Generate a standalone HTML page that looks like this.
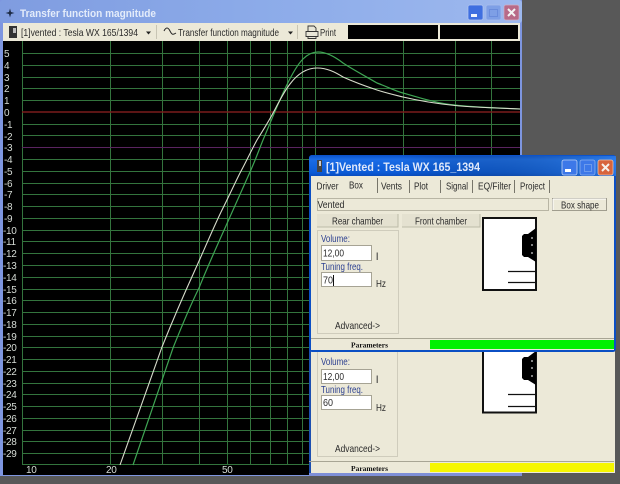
<!DOCTYPE html>
<html><head><meta charset="utf-8"><style>
html,body{margin:0;padding:0;background:#585858;width:620px;height:484px;overflow:hidden}
svg{display:block;filter:blur(.3px)}
text{font-family:"Liberation Sans",Arial,sans-serif;font-size:10.500px;fill:#2a2a2a}
.yl text,.xl text{fill:#d6dcd6;font-size:10px;letter-spacing:-.35px}
.tab{font-size:10.500px;fill:#2a2a2a}
.bl{fill:#2b3f90;font-size:10.500px}
.pm{font-family:"Liberation Serif",serif;font-weight:bold;font-size:7px;fill:#111}
</style></head><body>
<svg xmlns="http://www.w3.org/2000/svg" width="620" height="484" viewBox="0 0 620 484">
<defs>
<linearGradient id="t1" x1="0" y1="0" x2="1" y2="0"><stop offset="0" stop-color="#7f9ce0"/><stop offset=".5" stop-color="#8cabe9"/><stop offset="1" stop-color="#9db8ee"/></linearGradient>
<linearGradient id="t2" x1="0" y1="0" x2="0" y2="1"><stop offset="0" stop-color="#0a50c8"/><stop offset=".2" stop-color="#1a6ce6"/><stop offset=".8" stop-color="#0a5ad6"/><stop offset="1" stop-color="#0848b8"/></linearGradient>
<linearGradient id="t3" x1="0" y1="0" x2="1" y2="0"><stop offset="0" stop-color="#000" stop-opacity="0"/><stop offset="1" stop-color="#3c8cf4" stop-opacity=".55"/></linearGradient>
</defs>
<rect width="620" height="484" fill="#585858"/>

<!-- outer window -->
<rect x="0" y="0" width="522" height="476" fill="#7e96e0"/>
<rect x="0" y="0" width="522" height="23" rx="3" fill="url(#t1)"/>
<path d="M10 8.500L11 12L14.500 13L11 14L10 17.500L9 14L5.500 13L9 12Z" fill="#1c2a44"/>
<text x="20" y="17" textLength="136" lengthAdjust="spacingAndGlyphs" style="font-weight:bold;font-size:11px;fill:#e4ecfa">Transfer function magnitude</text>
<rect x="468" y="5" width="15" height="15" rx="2" fill="#3f6fe0" stroke="#b6c8f0" stroke-width=".7"/>
<rect x="471" y="14" width="6" height="3" fill="#f0f4fc"/>
<rect x="486" y="5" width="15" height="15" rx="2" fill="#7e9fe6" stroke="#a8bdec" stroke-width=".7"/>
<rect x="489.500" y="9.500" width="8" height="7" fill="none" stroke="#6a8cdc"/>
<rect x="504" y="5" width="15" height="15" rx="2" fill="#b86a88" stroke="#d0b0c4" stroke-width=".7"/>
<path d="M508 9L515 16M515 9L508 16" stroke="#f4f4f4" stroke-width="2"/>

<!-- toolbar -->
<rect x="3" y="23" width="517" height="18" fill="#ece9d8"/>
<rect x="9" y="26" width="8" height="12" fill="#333"/><rect x="13" y="28" width="3" height="5" fill="#bbb"/>
<text x="21" y="36" textLength="117" lengthAdjust="spacingAndGlyphs">[1]vented : Tesla WX 165/1394</text>
<path d="M146 31.500h5l-2.500 3z" fill="#222"/>
<path d="M156.500 25v14" stroke="#c8c5b4"/>
<path d="M164 31c2-4 4-4 6 0s3 4 6 2" fill="none" stroke="#222"/>
<text x="178" y="36" textLength="101" lengthAdjust="spacingAndGlyphs">Transfer function magnitude</text>
<path d="M288 31.500h5l-2.500 3z" fill="#222"/>
<path d="M297.500 25v14" stroke="#c8c5b4"/>
<path d="M308 31v-5h6l2 2v3M306 31.500h12v5h-12zM308 36.500v2h8v-2" fill="#e8e6d8" stroke="#333" stroke-width=".9"/>
<text x="320" y="36" textLength="16" lengthAdjust="spacingAndGlyphs">Print</text>
<rect x="348" y="25" width="90" height="14" fill="#000"/>
<rect x="440" y="25" width="78" height="14" fill="#000"/>

<!-- plot -->
<rect x="3" y="41" width="517" height="434" fill="#000"/>
<g stroke="#33743d" stroke-width="1" fill="none">
<path d="M22.500 41V465M110.500 41V465M162.500 41V465M199.500 41V465M227.500 41V465M250.500 41V465M270.500 41V465M287.500 41V465M302.500 41V465M315.500 41V465M403.500 41V465M455.500 41V465M491.500 41V465"/>
<path d="M22 53.500H520M22 65.500H520M22 77.500H520M22 88.500H520M22 100.500H520M22 124.500H520M22 135.500H520M22 159.500H520M22 171.500H520M22 183.500H520M22 194.500H520M22 206.500H520M22 218.500H520M22 230.500H520M22 241.500H520M22 253.500H520M22 265.500H520M22 277.500H520M22 289.500H520M22 300.500H520M22 312.500H520M22 324.500H520M22 336.500H520M22 347.500H520M22 359.500H520M22 371.500H520M22 383.500H520M22 394.500H520M22 406.500H520M22 418.500H520M22 430.500H520M22 441.500H520M22 453.500H520M22 464.500H520"/>
</g>
<path d="M22 112H520" stroke="#7a1c1c" stroke-width="1.500"/>
<path d="M22 147.500H520" stroke="#5a2460" stroke-width="1"/>
<path fill="none" stroke="#3fa554" stroke-width="1.200" d="M133 465C147 425 160 385 173 348C181 328 190 306 199 288C207 268 216 248 225 228C234 208 241 192 250 172C255 161 259 150 263 140C275 112 290 72 303 59C308 54 313 52 318 52C326 52 334 56 343 63C352 69 365 76 377 83C388 87 395 91 403 93C420 98 440 104 455 105C470 107 495 108 520 109"/>
<path fill="none" stroke="#d8dccc" stroke-width="1.100" d="M120 465C135 423 150 380 162 347C172 322 185 292 195 270C205 248 214 226 223 208C229 196 234 185 240 173C246 162 251 151 257 140C262 132 267 124 272 115C278 104 283 93 290 84C296 76 305 68 317 68C327 68 335 72 343 77C354 82 365 86 377 90C386 93 395 95 403 97C420 101 440 104 455 105.500C470 107 495 108 520 109"/>

<g class="yl">
<text x="4" y="57">5</text><text x="4" y="69">4</text><text x="4" y="81">3</text><text x="4" y="92">2</text><text x="4" y="104">1</text><text x="4" y="116">0</text>
<text x="4" y="128">-1</text><text x="4" y="140">-2</text><text x="4" y="151">-3</text><text x="4" y="163">-4</text><text x="4" y="175">-5</text><text x="4" y="187">-6</text><text x="4" y="198">-7</text><text x="4" y="210">-8</text><text x="4" y="222">-9</text>
<text x="3" y="234">-10</text><text x="3" y="245">-11</text><text x="3" y="257">-12</text><text x="3" y="269">-13</text><text x="3" y="281">-14</text><text x="3" y="293">-15</text><text x="3" y="304">-16</text><text x="3" y="316">-17</text><text x="3" y="328">-18</text><text x="3" y="340">-19</text><text x="3" y="351">-20</text><text x="3" y="363">-21</text><text x="3" y="375">-22</text><text x="3" y="387">-23</text><text x="3" y="398">-24</text><text x="3" y="410">-25</text><text x="3" y="422">-26</text><text x="3" y="434">-27</text><text x="3" y="445">-28</text><text x="3" y="457">-29</text>
</g>
<g class="xl"><text x="26" y="473">10</text><text x="106" y="473">20</text><text x="222" y="473">50</text></g>

<!-- lower (background) window -->
<rect x="309" y="340" width="306" height="136" fill="#ece9d8"/>
<rect x="309" y="340" width="2" height="134" fill="#1c4fb0"/>
<rect x="317.500" y="345.500" width="80" height="111" fill="none" stroke="#cfccbc"/>
<text class="bl" x="321" y="365" textLength="29" lengthAdjust="spacingAndGlyphs">Volume:</text>
<rect x="321.500" y="369.500" width="50" height="14" fill="#fff" stroke="#a6a394"/>
<text x="323" y="380" textLength="21" lengthAdjust="spacingAndGlyphs">12,00</text>
<text x="376" y="383">l</text>
<text class="bl" x="321" y="393" textLength="42" lengthAdjust="spacingAndGlyphs">Tuning freq.</text>
<rect x="321.500" y="395.500" width="50" height="14" fill="#fff" stroke="#a6a394"/>
<text x="323" y="406" textLength="10" lengthAdjust="spacingAndGlyphs">60</text>
<text x="376" y="411" textLength="10" lengthAdjust="spacingAndGlyphs">Hz</text>
<text x="335" y="452" textLength="45" lengthAdjust="spacingAndGlyphs">Advanced-&gt;</text>
<rect x="483" y="345" width="53" height="67.500" fill="#fff" stroke="#111" stroke-width="2"/>
<path d="M524 357h4l8-6v34l-8-5h-4l-2-2v-19z" fill="#000"/>
<circle cx="532" cy="361" r=".9" fill="#ddd"/><circle cx="532" cy="368" r=".9" fill="#ddd"/><circle cx="532" cy="376" r=".9" fill="#ddd"/>
<path d="M508 394.500H536M508 406.500H536" stroke="#111" stroke-width="1.300"/>
<path d="M309 461.500H614" stroke="#a8a594"/>
<text class="pm" x="351" y="471" textLength="37" lengthAdjust="spacingAndGlyphs">Parameters</text>
<rect x="430" y="463" width="184" height="9" fill="#f6f600"/>
<rect x="309" y="473" width="213" height="3" fill="#7e8fd8"/>
<rect x="522" y="473" width="98" height="11" fill="#585858"/>
<rect x="615" y="340" width="5" height="144" fill="#585858"/>

<!-- front window -->
<rect x="309" y="155" width="307" height="197" rx="3" fill="#0b4fc4"/>
<rect x="309" y="155" width="307" height="22" rx="3" fill="url(#t2)"/>
<rect x="400" y="156" width="216" height="20" fill="url(#t3)"/>
<rect x="317" y="160" width="5" height="12" fill="#444"/><rect x="319" y="161" width="2" height="5" fill="#ccc"/>
<text x="326" y="171" textLength="154" lengthAdjust="spacingAndGlyphs" style="font-weight:bold;font-size:11.500px;fill:#dfe8fa">[1]Vented : Tesla WX 165_1394</text>
<rect x="562" y="160" width="15" height="15" rx="2" fill="#3d78e8" stroke="#bcd0f4" stroke-width=".8"/>
<rect x="565" y="169" width="6" height="3" fill="#fff"/>
<rect x="580" y="160" width="15" height="15" rx="2" fill="#3d78e8" stroke="#8cb0ee" stroke-width=".8"/>
<rect x="584.500" y="164.500" width="7" height="7" fill="none" stroke="#6c9aec"/>
<rect x="598" y="160" width="15" height="15" rx="2" fill="#d8643c" stroke="#e8c0a8" stroke-width=".8"/>
<path d="M602 164L609 171M609 164L602 171" stroke="#f6f0ea" stroke-width="2"/>

<rect x="311" y="176" width="303" height="174" fill="#ece9d8"/>
<text class="tab" x="316.500" y="189.500" textLength="22" lengthAdjust="spacingAndGlyphs">Driver</text>
<text class="tab" x="349" y="188.500" textLength="14" lengthAdjust="spacingAndGlyphs">Box</text>
<text class="tab" x="381" y="189.500" textLength="21" lengthAdjust="spacingAndGlyphs">Vents</text>
<text class="tab" x="414" y="189.500" textLength="14" lengthAdjust="spacingAndGlyphs">Plot</text>
<text class="tab" x="446" y="189.500" textLength="22" lengthAdjust="spacingAndGlyphs">Signal</text>
<text class="tab" x="478" y="189.500" textLength="33" lengthAdjust="spacingAndGlyphs">EQ/Filter</text>
<text class="tab" x="520" y="189.500" textLength="25" lengthAdjust="spacingAndGlyphs">Project</text>
<path d="M377.500 178v15M409.500 180v13M440.500 180v13M472.500 180v13M514.500 180v13M549.500 180v13" stroke="#77756a"/>

<rect x="317.500" y="198.500" width="231" height="12" fill="#ece9d8" stroke="#b8b5a4"/>
<text x="317.500" y="208" textLength="27" lengthAdjust="spacingAndGlyphs">Vented</text>
<rect x="552.500" y="198.500" width="54" height="12" fill="#ece9d8" stroke="#a09d8e"/>
<path d="M553 199h53M553 199v11" stroke="#fff"/>
<text x="561" y="208.500" textLength="38" lengthAdjust="spacingAndGlyphs">Box shape</text>
<rect x="317" y="214" width="81" height="13" fill="#e4e1d0"/>
<path d="M317 227h81v-13" fill="none" stroke="#bdbaa9"/>
<text x="332" y="224.500" textLength="51" lengthAdjust="spacingAndGlyphs">Rear chamber</text>
<rect x="402" y="214" width="78" height="13" fill="#e4e1d0"/>
<path d="M402 227h78v-13" fill="none" stroke="#bdbaa9"/>
<text x="415" y="224.500" textLength="52" lengthAdjust="spacingAndGlyphs">Front chamber</text>

<rect x="317.500" y="230.500" width="81" height="103" fill="none" stroke="#cfccbc"/>
<text class="bl" x="321" y="242" textLength="29" lengthAdjust="spacingAndGlyphs">Volume:</text>
<rect x="321.500" y="245.500" width="50" height="15" fill="#fff" stroke="#a6a394"/>
<text x="323" y="256.500" textLength="21" lengthAdjust="spacingAndGlyphs">12,00</text>
<text x="376" y="260">l</text>
<text class="bl" x="321" y="270" textLength="42" lengthAdjust="spacingAndGlyphs">Tuning freq.</text>
<rect x="321.500" y="272.500" width="50" height="14" fill="#fff" stroke="#a6a394"/>
<text x="323" y="283.500" textLength="10" lengthAdjust="spacingAndGlyphs">70</text>
<path d="M333.500 275v11" stroke="#111"/>
<text x="376" y="287" textLength="10" lengthAdjust="spacingAndGlyphs">Hz</text>
<text x="335" y="329" textLength="45" lengthAdjust="spacingAndGlyphs">Advanced-&gt;</text>

<rect x="483" y="218" width="53" height="72" fill="#fff" stroke="#111" stroke-width="2"/>
<path d="M524 234h4l8-6v34l-8-5h-4l-2-2v-19z" fill="#000"/>
<circle cx="532" cy="238" r=".9" fill="#ddd"/><circle cx="532" cy="245" r=".9" fill="#ddd"/><circle cx="532" cy="253" r=".9" fill="#ddd"/>
<path d="M508 271.500H536M508 282.500H536" stroke="#111" stroke-width="1.300"/>

<path d="M311 338.500H614" stroke="#a8a594"/>
<text class="pm" x="351" y="347.500" textLength="37" lengthAdjust="spacingAndGlyphs">Parameters</text>
<rect x="430" y="340" width="184" height="9" fill="#00f000"/>
</svg>
</body></html>
